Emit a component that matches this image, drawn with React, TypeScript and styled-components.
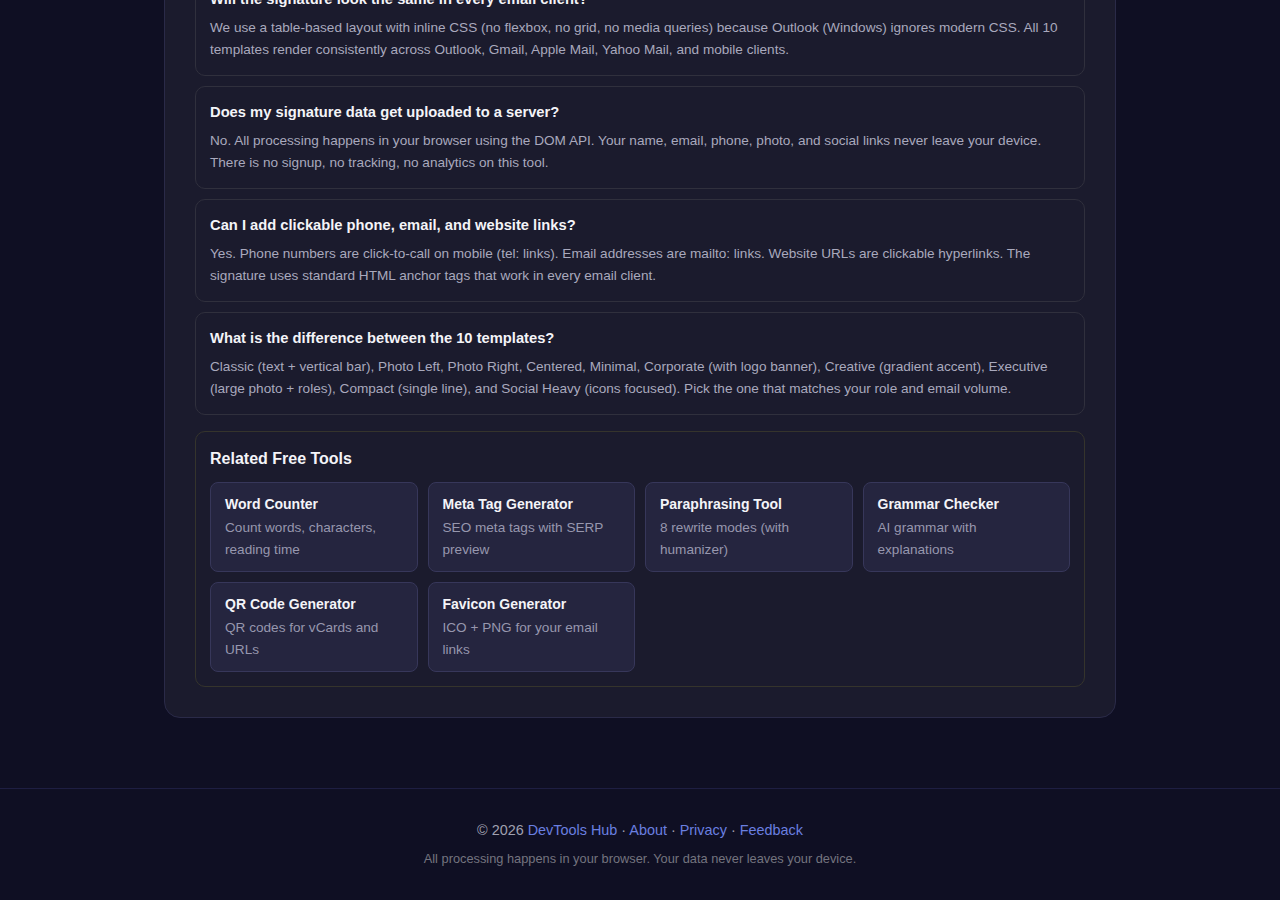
import React from "react";
import styled, { createGlobalStyle } from "styled-components";

const GlobalStyle = createGlobalStyle`
  html, body {
    margin: 0;
    padding: 0;
    background: #0f0f23;
    font-family: "Liberation Sans", Arial, sans-serif;
    color: #e6e6f0;
  }
  * { box-sizing: border-box; }
`;

const Main = styled.main`
  display: flex;
  justify-content: center;
  padding: 0 0 70px;
`;

const Panel = styled.section`
  width: 952px;
  margin-top: -58px;
  background: #1b1b2d;
  border: 1px solid #2a2a48;
  border-radius: 16px;
  padding: 30px;
  display: flex;
  flex-direction: column;
`;

const FaqList = styled.div`
  display: flex;
  flex-direction: column;
  gap: 10px;
`;

const FaqItem = styled.div`
  border: 1px solid #30303d;
  border-radius: 10px;
  padding: 15px 15px 15px 14px;
  background: #1b1b2d;
`;

const FaqQuestion = styled.h3`
  margin: 0 0 8px;
  font-size: 14.72px;
  line-height: 20px;
  font-weight: 700;
  color: #f4f4f8;
`;

const FaqAnswer = styled.p`
  margin: 0;
  font-size: 13.6px;
  line-height: 21.5px;
  color: #a9a9bd;
`;

const Related = styled.div`
  margin-top: 16px;
  border: 1px solid #35342c;
  border-radius: 10px;
  padding: 15px 14px 14px;
`;

const RelatedTitle = styled.h2`
  margin: 0 0 11px;
  font-size: 16px;
  line-height: 24px;
  font-weight: 700;
  color: #f4f4f8;
`;

const ToolGrid = styled.div`
  display: grid;
  grid-template-columns: repeat(4, 1fr);
  gap: 10px;
`;

const ToolCard = styled.a`
  display: block;
  text-decoration: none;
  background: #25253f;
  border: 1px solid #37375a;
  border-radius: 8px;
  padding: 12px 14px 10px;
  min-height: 90px;
`;

const ToolName = styled.div`
  font-size: 14px;
  line-height: 19px;
  font-weight: 700;
  color: #f4f4f8;
  margin-bottom: 3px;
`;

const ToolDesc = styled.div`
  font-size: 13.6px;
  line-height: 22px;
  color: #9797ae;
`;

const Footer = styled.footer`
  border-top: 1px solid #1e1e42;
  padding: 31px 20px 32px;
  text-align: center;
`;

const FooterLine = styled.div`
  font-size: 14.4px;
  line-height: 20px;
  color: #a0a0b0;
`;

const FooterLink = styled.a`
  color: #6a7fe0;
  text-decoration: none;
`;

const FooterNote = styled.div`
  margin-top: 10px;
  font-size: 12.8px;
  line-height: 18px;
  color: #74747f;
`;

const faqs = [
  {
    q: "Will the signature look the same in every email client?",
    a: "We use a table-based layout with inline CSS (no flexbox, no grid, no media queries) because Outlook (Windows) ignores modern CSS. All 10 templates render consistently across Outlook, Gmail, Apple Mail, Yahoo Mail, and mobile clients.",
  },
  {
    q: "Does my signature data get uploaded to a server?",
    a: "No. All processing happens in your browser using the DOM API. Your name, email, phone, photo, and social links never leave your device. There is no signup, no tracking, no analytics on this tool.",
  },
  {
    q: "Can I add clickable phone, email, and website links?",
    a: "Yes. Phone numbers are click-to-call on mobile (tel: links). Email addresses are mailto: links. Website URLs are clickable hyperlinks. The signature uses standard HTML anchor tags that work in every email client.",
  },
  {
    q: "What is the difference between the 10 templates?",
    a: "Classic (text + vertical bar), Photo Left, Photo Right, Centered, Minimal, Corporate (with logo banner), Creative (gradient accent), Executive (large photo + roles), Compact (single line), and Social Heavy (icons focused). Pick the one that matches your role and email volume.",
  },
];

const tools = [
  { name: "Word Counter", desc: "Count words, characters, reading time" },
  { name: "Meta Tag Generator", desc: "SEO meta tags with SERP preview" },
  { name: "Paraphrasing Tool", desc: "8 rewrite modes (with humanizer)" },
  { name: "Grammar Checker", desc: "AI grammar with explanations" },
  { name: "QR Code Generator", desc: "QR codes for vCards and URLs" },
  { name: "Favicon Generator", desc: "ICO + PNG for your email links" },
];

export default function App() {
  return (
    <>
      <GlobalStyle />
      <Main>
        <Panel>
          <FaqList>
            {faqs.map((f) => (
              <FaqItem key={f.q}>
                <FaqQuestion>{f.q}</FaqQuestion>
                <FaqAnswer>{f.a}</FaqAnswer>
              </FaqItem>
            ))}
          </FaqList>
          <Related>
            <RelatedTitle>Related Free Tools</RelatedTitle>
            <ToolGrid>
              {tools.map((t) => (
                <ToolCard key={t.name} href="#">
                  <ToolName>{t.name}</ToolName>
                  <ToolDesc>{t.desc}</ToolDesc>
                </ToolCard>
              ))}
            </ToolGrid>
          </Related>
        </Panel>
      </Main>
      <Footer>
        <FooterLine>
          © 2026 <FooterLink href="#">DevTools Hub</FooterLink> ·{" "}
          <FooterLink href="#">About</FooterLink> ·{" "}
          <FooterLink href="#">Privacy</FooterLink> ·{" "}
          <FooterLink href="#">Feedback</FooterLink>
        </FooterLine>
        <FooterNote>
          All processing happens in your browser. Your data never leaves your device.
        </FooterNote>
      </Footer>
    </>
  );
}
